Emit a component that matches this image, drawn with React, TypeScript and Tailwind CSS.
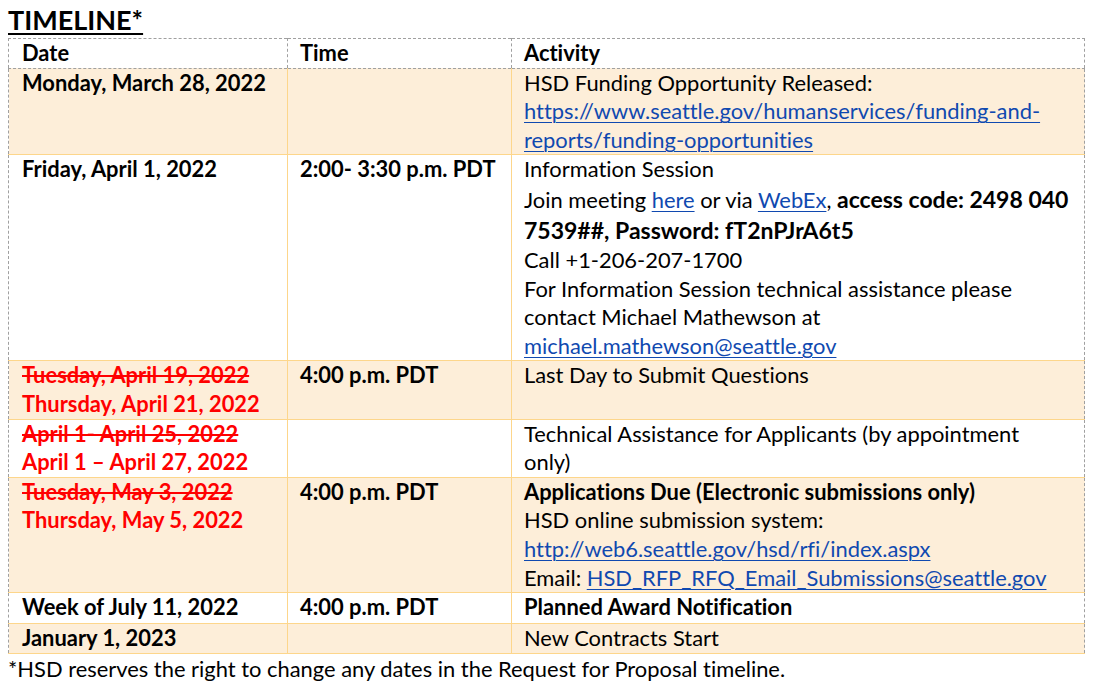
const link = "text-[#1049b0] underline underline-offset-[3px] decoration-1";
const bodyCell = "border-b border-b-[#fdd68b] px-[13px] py-0 align-top whitespace-nowrap";
const midCell = "border-r border-r-[#fdd68b]";

type Row = {
  date: React.ReactNode;
  time?: React.ReactNode;
  activity: React.ReactNode;
  shaded: boolean;
  tall?: boolean;
};

const rows: Row[] = [
  {
    shaded: true,
    date: <span className="font-bold">Monday, March 28, 2022</span>,
    activity: (
      <>
        HSD Funding Opportunity Released:
        <br />
        <a className={link}>https://www.seattle.gov/humanservices/funding-and-</a>
        <br />
        <a className={link}>reports/funding-opportunities</a>
      </>
    ),
  },
  {
    shaded: false,
    date: <span className="font-bold">Friday, April 1, 2022</span>,
    time: <span className="font-bold">2:00- 3:30 p.m. PDT</span>,
    activity: (
      <>
        Information Session
        <br />
        <span className="leading-[31px]">
          Join meeting <a className={link}>here</a> or via <a className={link}>WebEx</a>,{" "}
          <b className="text-[23px]">access code: 2498 040</b>
        </span>
        <br />
        <b className="text-[23px] leading-[31px]">7539##, Password: fT2nPJrA6t5</b>
        <br />
        Call +1-206-207-1700
        <br />
        For Information Session technical assistance please
        <br />
        contact Michael Mathewson at
        <br />
        <a className={link}>michael.mathewson@seattle.gov</a>
      </>
    ),
  },
  {
    shaded: true,
    date: (
      <span className="font-bold text-[#ff0000]">
        <s>Tuesday, April 19, 2022</s>
        <br />
        Thursday, April 21, 2022
      </span>
    ),
    time: <span className="font-bold">4:00 p.m. PDT</span>,
    activity: "Last Day to Submit Questions",
  },
  {
    shaded: false,
    date: (
      <span className="font-bold text-[#ff0000]">
        <s>April 1- April 25, 2022</s>
        <br />
        April 1 – April 27, 2022
      </span>
    ),
    activity: (
      <>
        Technical Assistance for Applicants (by appointment
        <br />
        only)
      </>
    ),
  },
  {
    shaded: true,
    date: (
      <span className="font-bold text-[#ff0000]">
        <s>Tuesday, May 3, 2022</s>
        <br />
        Thursday, May 5, 2022
      </span>
    ),
    time: <span className="font-bold">4:00 p.m. PDT</span>,
    activity: (
      <>
        <b>Applications Due (Electronic submissions only)</b>
        <br />
        HSD online submission system:
        <br />
        <a className={link}>http://web6.seattle.gov/hsd/rfi/index.aspx</a>
        <br />
        Email: <a className={link}>HSD_RFP_RFQ_Email_Submissions@seattle.gov</a>
      </>
    ),
  },
  {
    shaded: false,
    tall: true,
    date: <span className="font-bold">Week of July 11, 2022</span>,
    time: <span className="font-bold">4:00 p.m. PDT</span>,
    activity: <b>Planned Award Notification</b>,
  },
  {
    shaded: true,
    date: <span className="font-bold">January 1, 2023</span>,
    activity: "New Contracts Start",
  },
];

export default function App() {
  return (
    <div
      className="bg-white px-[8px] pt-[1px] text-black text-[21.9px] leading-[28.6px] [font-variant-ligatures:none]"
      style={{ fontFamily: "Lato, 'Open Sans', sans-serif" }}
    >
      <h1 className="text-[27px] leading-[36px] font-bold underline underline-offset-[3px] decoration-2 pt-[1px]">
        TIMELINE*
      </h1>
      <table className="w-[1077px] table-fixed border-collapse border-t border-x border-dashed border-[#a0a0a0]">
        <colgroup>
          <col className="w-[279px]" />
          <col className="w-[224px]" />
          <col />
        </colgroup>
        <thead>
          <tr className="h-[28px] text-left font-bold">
            <th className="border-r border-b border-dashed border-[#a0a0a0] px-[13px] py-0">Date</th>
            <th className="border-r border-b border-dashed border-[#a0a0a0] px-[12px] py-0">Time</th>
            <th className="border-b border-dashed border-[#a0a0a0] px-[12px] py-0">Activity</th>
          </tr>
        </thead>
        <tbody>
          {rows.map((r, i) => (
            <tr key={i} className={`${r.shaded ? "bg-[#fdeed9]" : "bg-white"} ${r.tall ? "h-[31px]" : ""}`}>
              <td className={`${bodyCell} ${midCell}`}>{r.date}</td>
              <td className={`${bodyCell} ${midCell} !px-[12px]`}>{r.time}</td>
              <td className={`${bodyCell} !px-[12px]`}>{r.activity}</td>
            </tr>
          ))}
        </tbody>
      </table>
      <p className="pt-[1px]">*HSD reserves the right to change any dates in the Request for Proposal timeline.</p>
    </div>
  );
}
